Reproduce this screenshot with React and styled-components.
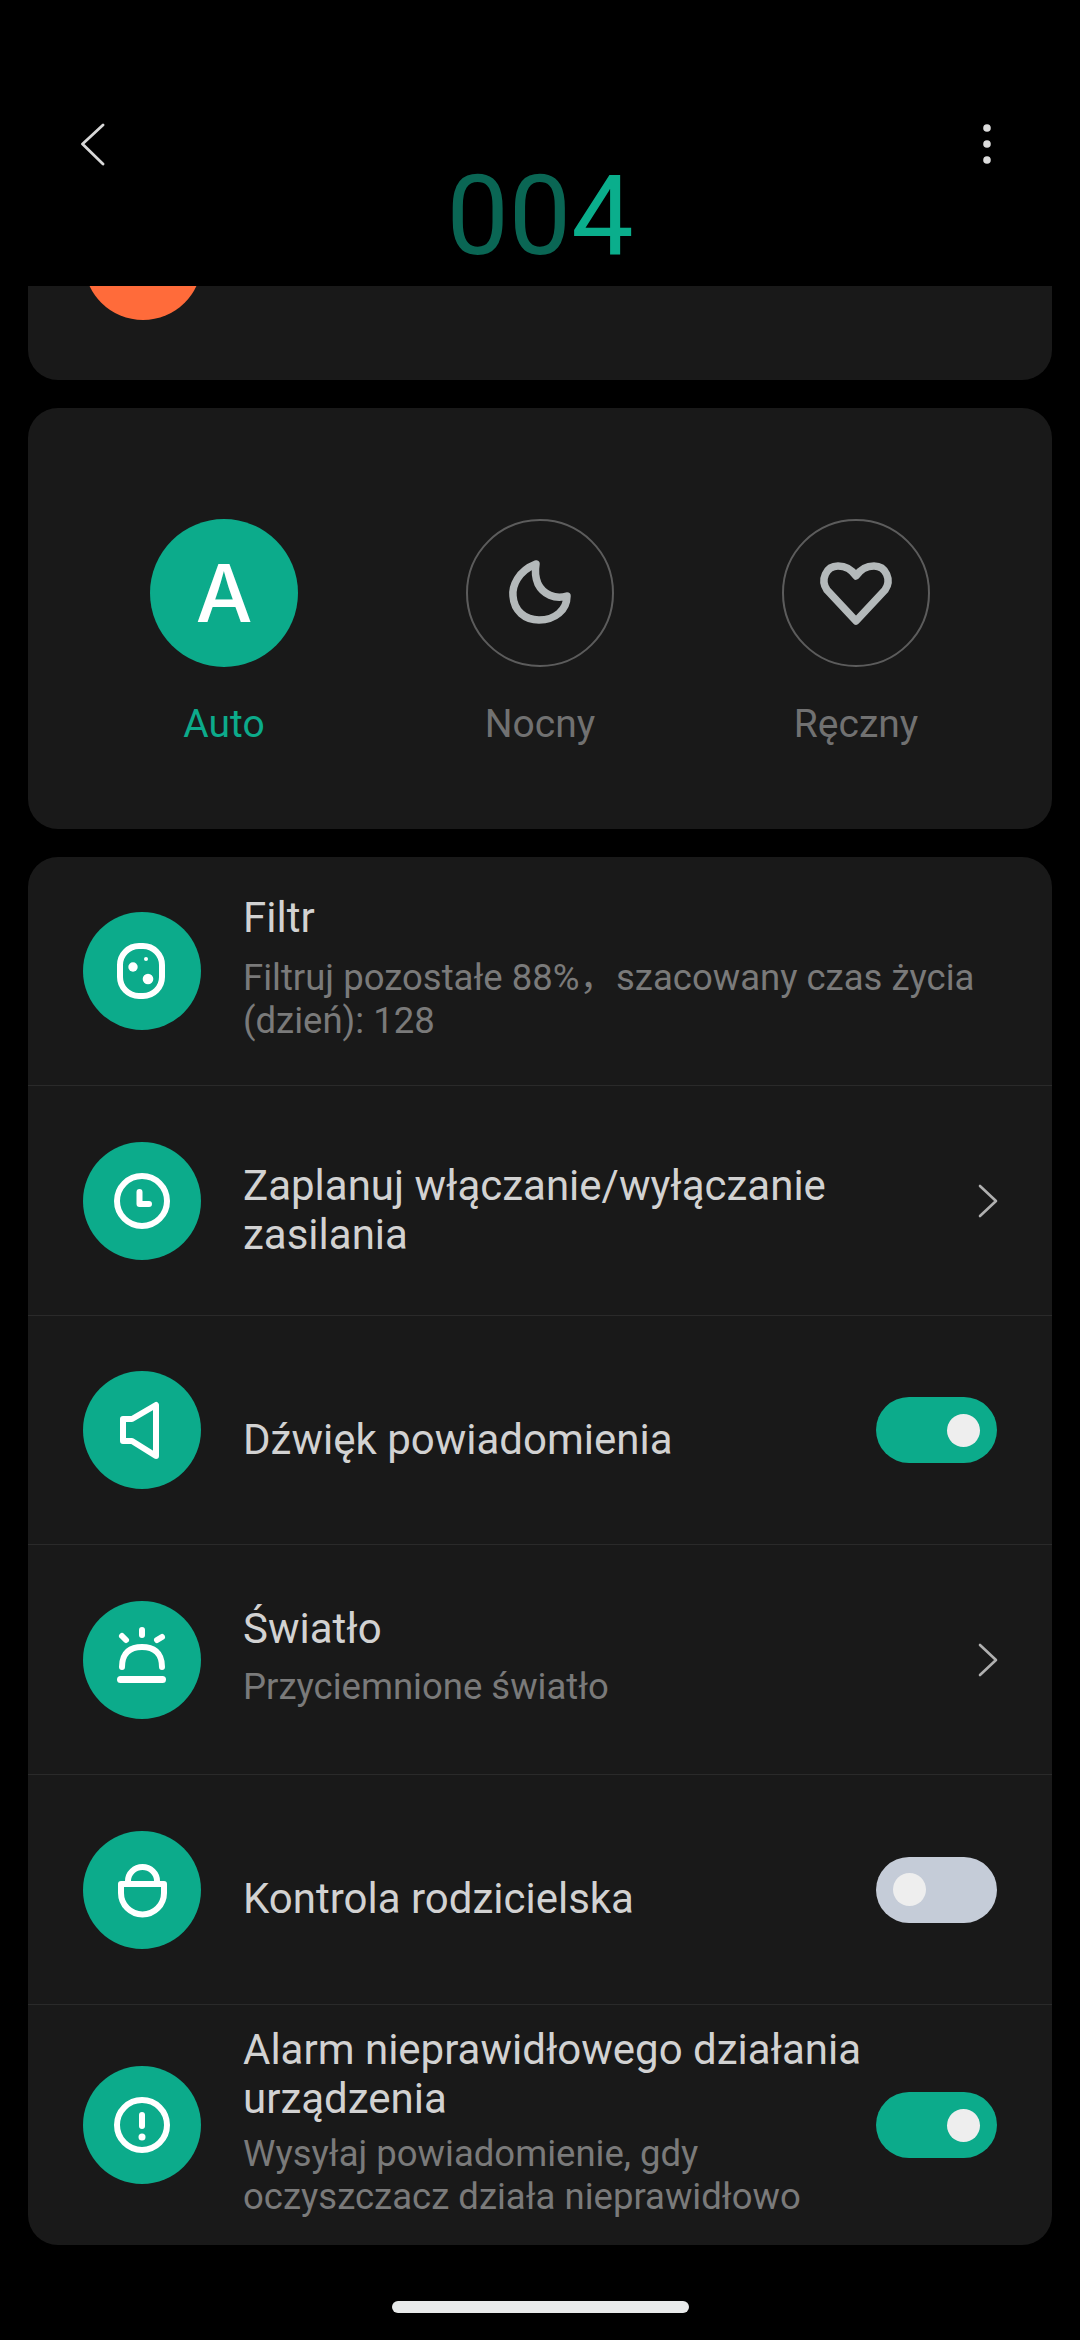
import React from "react";
import styled, { createGlobalStyle } from "styled-components";

const Global = createGlobalStyle`
  html, body { margin: 0; padding: 0; background: #000; }
  body { font-family: Roboto, "Noto Sans CJK SC", "Noto Sans", sans-serif; }
`;

const Page = styled.div`
  width: 1080px;
  height: 2340px;
  background: #000;
  display: flex;
  flex-direction: column;
  overflow: hidden;
`;

const Header = styled.header`
  height: 286px;
  flex: none;
  box-sizing: border-box;
  padding: 123px 87px 0 81px;
  display: grid;
  grid-template-columns: 1fr auto;
  align-items: start;
`;

const DeviceName = styled.h1`
  grid-column: 1 / -1;
  margin: -20px -6px 0 0;
  font-size: 111px;
  line-height: 131px;
  font-weight: 400;
  text-align: center;
  color: #0a6654;
`;

const Accent = styled.span`
  color: #0aae8c;
`;

const Content = styled.main`
  display: flex;
  flex-direction: column;
  gap: 28px;
  padding: 0 28px;
`;

const Card = styled.section`
  background: #191919;
  border-radius: 0 0 30px 30px;
  overflow: hidden;
`;

const ClippedCard = styled(Card)`
  height: 94px;
`;

const OrangeDot = styled.div`
  width: 118px;
  height: 118px;
  margin: -84px 0 0 56px;
  border-radius: 50%;
  background: #ff6b3a;
`;

const ModeCard = styled(Card)`
  border-radius: 30px;
  height: 421px;
  box-sizing: border-box;
  padding-top: 111px;
  display: grid;
  grid-template-columns: repeat(3, 316px);
  justify-content: center;
`;

const Mode = styled.div`
  display: flex;
  flex-direction: column;
  align-items: center;
`;

const ModeCircle = styled.div`
  width: 148px;
  height: 148px;
  box-sizing: border-box;
  border-radius: 50%;
  display: flex;
  align-items: center;
  justify-content: center;
  background: ${(p) => (p.$active ? "#0cab8b" : "transparent")};
  border: ${(p) => (p.$active ? "none" : "2px solid #5c5c5c")};
`;

const ModeLetter = styled.span`
  font-family: Inter, Roboto, sans-serif;
  font-size: 80px;
  font-weight: 500;
  color: #fff;
  line-height: 1;
`;

const ModeLabel = styled.div`
  margin-top: 34px;
  font-size: 39px;
  line-height: 46px;
  font-weight: 400;
  color: ${(p) => (p.$active ? "#0cab8b" : "#717171")};
`;

const ListCard = styled(Card)`
  border-radius: 30px;
`;

const Row = styled.div`
  height: ${(p) => p.$h}px;
  box-sizing: border-box;
  display: flex;
  align-items: center;
  padding: 0 55px;
  border-top: ${(p) => (p.$first ? "none" : "1px solid #2a2a2a")};
`;

const IconCircle = styled.div`
  width: 118px;
  height: 118px;
  flex: none;
  border-radius: 50%;
  background: #0cab8b;
  display: flex;
  align-items: center;
  justify-content: center;
`;

const RowText = styled.div`
  flex: 1;
  margin-left: 42px;
  min-width: 0;
  padding: ${(p) => (p.$hasSub ? "0 0 7px" : "18px 0 0")};
`;

const Title = styled.div`
  font-size: 42px;
  line-height: 49px;
  color: #d2d2d2;
  font-weight: 400;
`;

const Sub = styled.div`
  font-size: 36.5px;
  line-height: 43px;
  color: #7a7a7a;
  margin-top: ${(p) => p.$mt}px;
`;

const Toggle = styled.div`
  width: 121px;
  height: 66px;
  flex: none;
  box-sizing: border-box;
  border-radius: 33px;
  padding: 0 17px;
  display: flex;
  align-items: center;
  justify-content: ${(p) => (p.$on ? "flex-end" : "flex-start")};
  background: ${(p) => (p.$on ? "#0cab8b" : "#c5ccd8")};
`;

const Knob = styled.div`
  width: 33px;
  height: 33px;
  border-radius: 50%;
  background: #eeeeee;
`;

const HomeArea = styled.div`
  flex: 1;
  display: flex;
  justify-content: center;
  padding-top: 56px;
`;

const HomeBar = styled.div`
  width: 297px;
  height: 12px;
  border-radius: 6px;
  background: #e8eaea;
`;

const IconSvg = styled.svg`
  overflow: visible;
`;

const ChevronSvg = styled.svg`
  flex: none;
  margin-right: -1px;
`;

const Icon = ({ children }) => (
  <IconSvg width="60" height="60" viewBox="0 0 60 60" fill="none" stroke="#fff" strokeWidth="6" strokeLinecap="round" strokeLinejoin="round">
    {children}
  </IconSvg>
);

const Chevron = () => (
  <ChevronSvg width="20" height="34" viewBox="0 0 20 34" fill="none" stroke="#b0b0b0" strokeWidth="2.6" strokeLinecap="round" strokeLinejoin="round">
    <path d="M2 2 L18 17 L2 32" />
  </ChevronSvg>
);

const rows = [
  {
    h: 228, first: true,
    icon: (
      <Icon>
        <rect x="8" y="5" width="42" height="50" rx="19" />
        <circle cx="21" cy="26" r="4.7" fill="#fff" stroke="none" />
        <circle cx="36" cy="38" r="5.3" fill="#fff" stroke="none" />
        <circle cx="34" cy="18" r="2" fill="#fff" stroke="none" />
      </Icon>
    ),
    title: "Filtr",
    sub: <>Filtruj pozostałe 88%，szacowany czas życia<br />(dzień): 128</>,
    subMt: 14,
  },
  {
    h: 230,
    icon: (
      <Icon>
        <circle cx="30" cy="30" r="25" />
        <path d="M27.5 21 V33 H37" strokeWidth="6" />
      </Icon>
    ),
    title: <>Zaplanuj włączanie/wyłączanie<br />zasilania</>,
    chevron: true,
  },
  {
    h: 229,
    icon: (
      <Icon>
        <path d="M11 19 H20 L44 5 V56 L20 41 H11 Z" />
      </Icon>
    ),
    title: "Dźwięk powiadomienia",
    toggle: true,
  },
  {
    h: 230,
    icon: (
      <Icon>
        <path d="M10 37 C10 22 19 17 30 17 C41 17 50 22 50 37" />
        <path d="M8.5 49.5 H50.5" strokeWidth="7" />
        <path d="M30 0 V5" />
        <path d="M10 6 L14 10" />
        <path d="M50 7 L45 10" />
      </Icon>
    ),
    title: "Światło",
    sub: "Przyciemnione światło",
    subMt: 12,
    chevron: true,
  },
  {
    h: 230,
    icon: (
      <Icon>
        <path d="M9 24 H52 V33 A21 21 0 0 1 9 33 Z" />
        <path d="M16 24 V21 A14.5 14 0 0 1 45 21 V24" />
      </Icon>
    ),
    title: "Kontrola rodzicielska",
    toggle: false,
  },
  {
    h: 241,
    icon: (
      <Icon>
        <circle cx="30" cy="30" r="25" />
        <path d="M30 20 V31" />
        <circle cx="30" cy="42" r="3.5" fill="#fff" stroke="none" />
      </Icon>
    ),
    title: <>Alarm nieprawidłowego działania<br />urządzenia</>,
    sub: <>Wysyłaj powiadomienie, gdy<br />oczyszczacz działa nieprawidłowo</>,
    subMt: 9,
    toggle: true,
  },
];

export default function App() {
  return (
    <Page>
      <Global />
      <Header>
        <svg width="24" height="44" viewBox="0 0 24 44" fill="none" stroke="#d8d8d8" strokeWidth="2.8" strokeLinecap="round" strokeLinejoin="round">
          <path d="M22 2 L1.5 21 L22 41" />
        </svg>
        <svg width="12" height="44" viewBox="0 0 12 44" fill="#dcdcdc">
          <circle cx="6" cy="5" r="3.8" />
          <circle cx="6" cy="21" r="3.8" />
          <circle cx="6" cy="37" r="3.8" />
        </svg>
        <DeviceName>00<Accent>4</Accent></DeviceName>
      </Header>
      <Content>
        <ClippedCard>
          <OrangeDot />
        </ClippedCard>
        <ModeCard>
          <Mode>
            <ModeCircle $active><ModeLetter>A</ModeLetter></ModeCircle>
            <ModeLabel $active>Auto</ModeLabel>
          </Mode>
          <Mode>
            <ModeCircle>
              <svg width="70" height="70" viewBox="0 0 70 70" fill="none" stroke="#b4b9ba" strokeWidth="7.5" strokeLinejoin="round" strokeLinecap="round">
                <path d="M31 6 C13 13 7 28 8 38 C9 53 20 62 34 62 C50 62 62 52 62 38 C50 42 38 36 33 26 C30 19 30 12 31 6 Z" />
              </svg>
            </ModeCircle>
            <ModeLabel>Nocny</ModeLabel>
          </Mode>
          <Mode>
            <ModeCircle>
              <svg width="80" height="70" viewBox="0 0 80 70" fill="none" stroke="#b4b9ba" strokeWidth="7.5" strokeLinejoin="round" strokeLinecap="round">
                <path d="M40 63 L11 32 C4 22 10 8 22 8 C30 8 36 12 40 18 C44 12 50 8 58 8 C70 8 76 22 69 32 Z" />
              </svg>
            </ModeCircle>
            <ModeLabel>Ręczny</ModeLabel>
          </Mode>
        </ModeCard>
        <ListCard>
          {rows.map((r, i) => (
            <Row key={i} $h={r.h} $first={r.first}>
              <IconCircle>{r.icon}</IconCircle>
              <RowText $hasSub={!!r.sub}>
                <Title>{r.title}</Title>
                {r.sub && <Sub $mt={r.subMt}>{r.sub}</Sub>}
              </RowText>
              {r.chevron && <Chevron />}
              {r.toggle !== undefined && (
                <Toggle $on={r.toggle}><Knob /></Toggle>
              )}
            </Row>
          ))}
        </ListCard>
      </Content>
      <HomeArea><HomeBar /></HomeArea>
    </Page>
  );
}
